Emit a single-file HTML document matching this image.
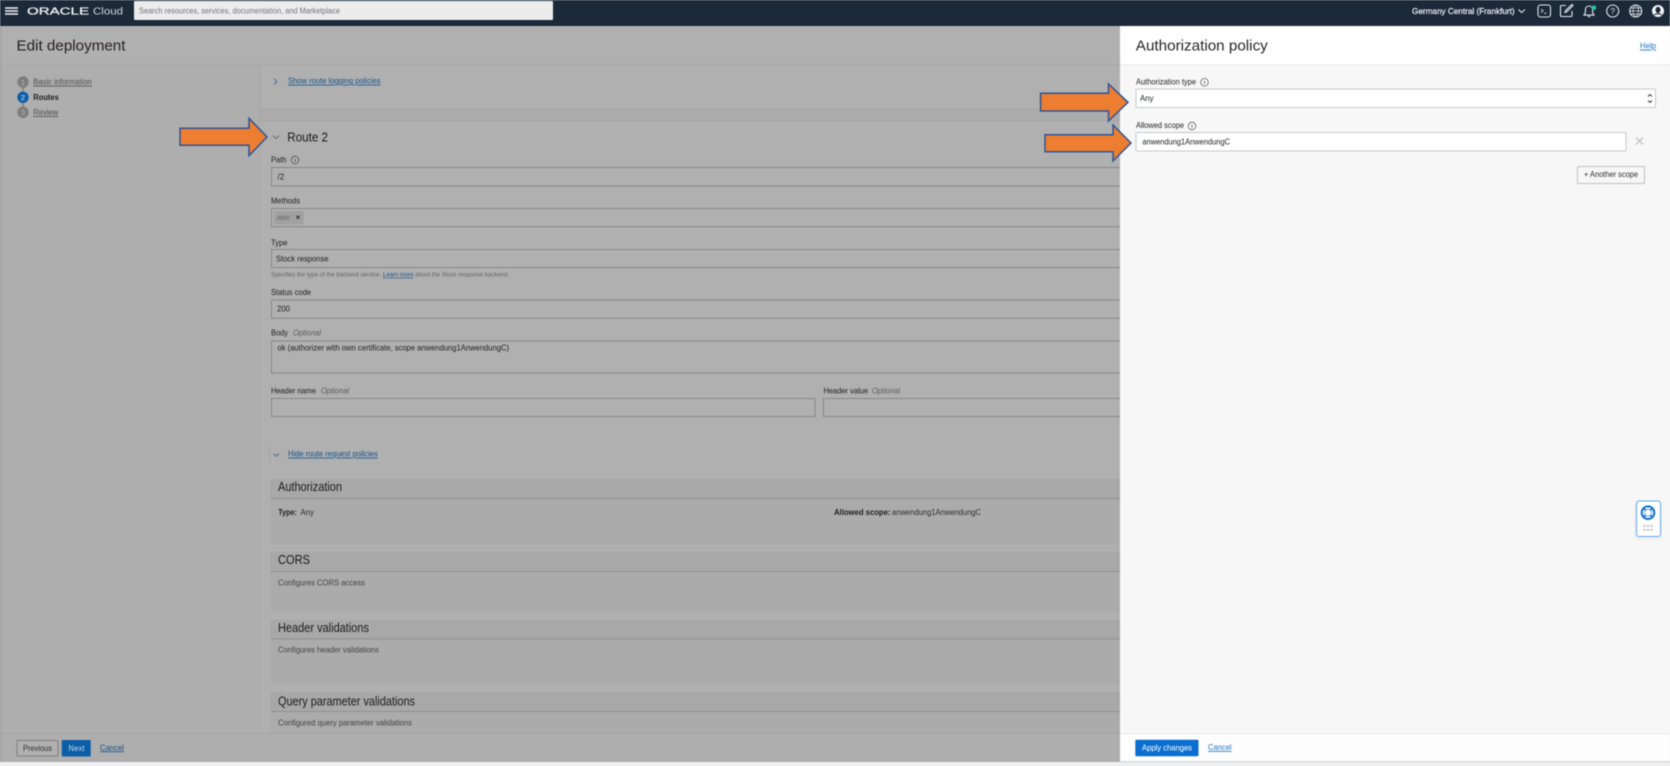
<!DOCTYPE html>
<html lang="en">
<head>
<meta charset="utf-8">
<title>Edit deployment</title>
<style>
html,body{margin:0;padding:0;width:1670px;height:766px;overflow:hidden;background:#f0f0f0}
svg{display:block;filter:blur(.5px)}
text{font-family:"Liberation Sans",Arial,sans-serif;font-size:8px;fill:#262626}
.l{font-size:8px;fill:#1f1f1f}
.o{font-size:8px;font-style:italic;fill:#5c5c5c}
.v{font-size:8px;fill:#222}
.h{font-size:12.5px;fill:#1c1c1c}
.s{font-size:8px;fill:#444}
.a{fill:#15528c;text-decoration:underline}
.f{fill:#b0b0b0;stroke:#878787;stroke-width:1}
.w{fill:#fff;stroke:#c4c9ce;stroke-width:1}
.b{fill:#a8a8a8}
.c{fill:#ababab}
.r{fill:#8f8f8f}
.i{fill:none;stroke:#555;stroke-width:.8}
.ic{fill:none;stroke:#e4e8ec;stroke-width:1.1}
.ar{fill:#ed7d31;stroke:#2f5597;stroke-width:1.5}
</style>
</head>
<body>
<svg width="1670" height="766" viewBox="0 0 1670 766" xmlns="http://www.w3.org/2000/svg">
<!-- page background -->
<rect width="1670" height="766" fill="#efefef"/>
<rect y="26" width="1120" height="736" fill="#b0b0b0"/>
<rect y="26" width="1" height="736" fill="#8d8d8d"/>
<!-- header -->
<text x="16.5" y="50.7" style="font-size:15.2px;fill:#262120" textLength="109" lengthAdjust="spacingAndGlyphs">Edit deployment</text>
<rect y="64" x="1" width="1119" height="1" fill="#a8a8a8"/>
<!-- left nav -->
<rect x="1" y="65" width="259" height="668" fill="#aeaeae"/>
<rect x="22.3" y="84" width="1.4" height="28" fill="#7e7e7e"/>
<circle cx="23" cy="82" r="5.7" fill="#7d7d7d"/>
<text x="23" y="85" text-anchor="middle" style="font-size:7.5px;fill:#b8b8b8">1</text>
<circle cx="23" cy="97.3" r="5.7" fill="#0c5ea8"/>
<text x="23" y="100.2" text-anchor="middle" style="font-size:7.5px;fill:#e4eef7">2</text>
<circle cx="23" cy="112.3" r="5.7" fill="#7d7d7d"/>
<text x="23" y="115.2" text-anchor="middle" style="font-size:7.5px;fill:#b8b8b8">3</text>
<text x="33.3" y="84.7" textLength="58.5" lengthAdjust="spacingAndGlyphs" style="fill:#4d4d4d;text-decoration:underline">Basic information</text>
<text x="33.3" y="100" textLength="25.5" lengthAdjust="spacingAndGlyphs" style="font-weight:bold;fill:#1c1c1c">Routes</text>
<text x="33.3" y="115" textLength="25" lengthAdjust="spacingAndGlyphs" style="fill:#4d4d4d;text-decoration:underline">Review</text>

<!-- main column -->
<rect x="260" y="65" width="860" height="668" fill="#acacac"/>
<rect x="260" y="65" width="860" height="44" fill="#b0b0b0"/>
<rect x="260" y="108.5" width="860" height="1" fill="#a4a4a4"/>
<rect x="259.5" y="65" width="1" height="668" fill="#a4a4a4"/>
<path d="M274 78.500l3 3-3 3" fill="none" stroke="#2a5f94" stroke-width=".8"/>
<text x="288" y="83.7" textLength="92.5" lengthAdjust="spacingAndGlyphs" class="a">Show route logging policies</text>

<rect x="260" y="120.7" width="860" height="612" fill="#b0b0b0"/>
<rect x="260" y="120.2" width="860" height="1" fill="#a4a4a4"/>
<path d="M273 135.700l3 2.800 3-2.800" fill="none" stroke="#555" stroke-width=".8"/>
<text x="287.3" y="141.3" textLength="40.7" lengthAdjust="spacingAndGlyphs" style="font-size:12.5px;fill:#1a1a1a">Route 2</text>

<text x="271" y="162.7" class="l" textLength="15.5" lengthAdjust="spacingAndGlyphs">Path</text>
<circle cx="295" cy="160" r="3.8" class="i"/><rect x="294.6" y="158.8" width=".9" height="3" fill="#555"/>
<rect x="271.5" y="167.5" width="860" height="18.5" class="f"/>
<text x="277.5" y="179.7" class="v">/2</text>

<text x="271" y="203.7" class="l" textLength="29" lengthAdjust="spacingAndGlyphs">Methods</text>
<rect x="271.5" y="208.5" width="860" height="18.2" class="f"/>
<rect x="274" y="211" width="29.5" height="13.3" fill="#a0a0a0"/>
<text x="277" y="220" style="font-size:6.5px;fill:#5e5e5e" textLength="13" lengthAdjust="spacing">ANY</text>
<path d="M296.4 215.6l3.2 3.2m0-3.2l-3.2 3.2" stroke="#333" stroke-width="1" fill="none"/>

<text x="271" y="245.3" class="l" textLength="16.5" lengthAdjust="spacingAndGlyphs">Type</text>
<rect x="271.5" y="249.5" width="860" height="18" class="f"/>
<text x="276" y="261.3" class="v" textLength="52.5" lengthAdjust="spacingAndGlyphs">Stock response</text>
<text x="271" y="276.7" style="font-size:6.2px;fill:#666" textLength="110" lengthAdjust="spacingAndGlyphs">Specifies the type of the backend service.</text>
<text x="383" y="276.7" style="font-size:6.2px;text-decoration:underline" class="a" textLength="30.5" lengthAdjust="spacingAndGlyphs">Learn more</text>
<text x="415" y="276.7" style="font-size:6.2px;fill:#666" textLength="94" lengthAdjust="spacingAndGlyphs">about the Stock response backend.</text>

<text x="271" y="295" class="l" textLength="40" lengthAdjust="spacingAndGlyphs">Status code</text>
<rect x="271.5" y="300" width="860" height="18.2" class="f"/>
<text x="277" y="311.7" class="v" textLength="13" lengthAdjust="spacingAndGlyphs">200</text>

<text x="271" y="335.7" class="l" textLength="17" lengthAdjust="spacingAndGlyphs">Body</text>
<text x="293" y="335.7" class="o" textLength="28" lengthAdjust="spacingAndGlyphs">Optional</text>
<rect x="271.5" y="341" width="860" height="32" class="f"/>
<text x="277.5" y="350.7" class="v" textLength="231.5" lengthAdjust="spacingAndGlyphs">ok (authorizer with own certificate, scope anwendung1AnwendungC)</text>

<text x="271" y="393.3" class="l" textLength="45" lengthAdjust="spacingAndGlyphs">Header name</text>
<text x="321" y="393.3" class="o" textLength="28" lengthAdjust="spacingAndGlyphs">Optional</text>
<rect x="271.5" y="398.5" width="543.5" height="18" class="f"/>
<text x="823.5" y="393.3" class="l" textLength="44.5" lengthAdjust="spacingAndGlyphs">Header value</text>
<text x="872" y="393.3" class="o" textLength="28" lengthAdjust="spacingAndGlyphs">Optional</text>
<rect x="823.5" y="398.5" width="310" height="18" class="f"/>

<rect x="269.3" y="447" width=".8" height="15" fill="#97a1ab"/>
<path d="M273.500 453.500l2.800 2.800 2.800-2.800" fill="none" stroke="#2a5f94" stroke-width=".8"/>
<text x="288" y="456.7" textLength="89.8" lengthAdjust="spacingAndGlyphs" class="a">Hide route request policies</text>

<!-- policy cards -->
<rect x="270.6" y="479" width="850" height="65" class="c"/>
<rect x="270.6" y="479" width="850" height="19" class="b"/>
<rect x="270.6" y="498" width="850" height="1" class="r"/>
<text x="278" y="491" class="h" textLength="64" lengthAdjust="spacingAndGlyphs">Authorization</text>
<text x="278.3" y="515" textLength="18.5" lengthAdjust="spacingAndGlyphs" style="font-weight:bold;fill:#1e1e1e">Type:</text>
<text x="300.5" y="515" textLength="13.5" lengthAdjust="spacingAndGlyphs" style="fill:#2e2e2e">Any</text>
<text x="834" y="515" textLength="56.5" lengthAdjust="spacingAndGlyphs" style="font-weight:bold;fill:#1e1e1e">Allowed scope:</text>
<text x="892" y="515" textLength="89" lengthAdjust="spacingAndGlyphs" style="fill:#2e2e2e">anwendung1AnwendungC</text>

<rect x="270.6" y="552" width="850" height="59.7" class="c"/>
<rect x="270.6" y="552" width="850" height="19" class="b"/>
<rect x="270.6" y="571" width="850" height="1" class="r"/>
<text x="278" y="564" class="h" textLength="32" lengthAdjust="spacingAndGlyphs">CORS</text>
<text x="278" y="585.3" class="s" textLength="87" lengthAdjust="spacingAndGlyphs">Configures CORS access</text>

<rect x="270.6" y="620" width="850" height="65" class="c"/>
<rect x="270.6" y="620" width="850" height="18.5" class="b"/>
<rect x="270.6" y="638.3" width="850" height="1" class="r"/>
<text x="278" y="632" class="h" textLength="91" lengthAdjust="spacingAndGlyphs">Header validations</text>
<text x="278" y="652.3" class="s" textLength="101" lengthAdjust="spacingAndGlyphs">Configures header validations</text>

<rect x="270.6" y="692" width="850" height="41" class="c"/>
<rect x="270.6" y="692" width="850" height="19" class="b"/>
<rect x="270.6" y="711" width="850" height="1" class="r"/>
<text x="278" y="705.3" class="h" textLength="137" lengthAdjust="spacingAndGlyphs">Query parameter validations</text>
<text x="278" y="725.7" class="s" textLength="134" lengthAdjust="spacingAndGlyphs">Configured query parameter validations</text>

<!-- footer left -->
<rect x="1" y="733" width="1119" height="29" fill="#aeaeae"/>
<rect x="1" y="733" width="1119" height="1" fill="#a4a4a4"/>
<rect x="17" y="740.5" width="41" height="15.5" rx="1" fill="#b0b0b0" stroke="#7e7e7e"/>
<text x="23" y="751" style="fill:#333" textLength="29" lengthAdjust="spacingAndGlyphs">Previous</text>
<rect x="61.7" y="740" width="29" height="16.5" rx="1" fill="#0c5ea8"/>
<text x="68.5" y="751" style="fill:#c6d6e6" textLength="16" lengthAdjust="spacingAndGlyphs">Next</text>
<text x="100" y="750.3" class="a" textLength="24" lengthAdjust="spacingAndGlyphs">Cancel</text>

<!-- right panel -->
<rect x="1120" y="26" width="550" height="736" fill="#f7f7f7"/>
<rect x="1120" y="26" width="550" height="38" fill="#fff"/>
<rect x="1120" y="64" width="550" height="1.2" fill="#ececec"/>
<text x="1135.8" y="50.7" style="font-size:15.2px;fill:#262626" textLength="132" lengthAdjust="spacingAndGlyphs">Authorization policy</text>
<text x="1640" y="48.7" style="font-size:8.5px;fill:#1f74c6;text-decoration:underline" textLength="16" lengthAdjust="spacingAndGlyphs">Help</text>

<text x="1136" y="84.3" class="l" textLength="60" lengthAdjust="spacingAndGlyphs">Authorization type</text>
<circle cx="1204.5" cy="82.3" r="3.8" fill="none" stroke="#666" stroke-width=".8"/><rect x="1204.1" y="81" width=".9" height="3" fill="#666"/>
<rect x="1136" y="89" width="519.5" height="18.5" rx="1" class="w"/>
<text x="1140" y="101" class="v" textLength="13.5" lengthAdjust="spacingAndGlyphs">Any</text>
<path d="M1648 96.5l2-2 2 2M1648 100.5l2 2 2-2" fill="none" stroke="#333" stroke-width=".9"/>

<text x="1136" y="128" class="l" textLength="48" lengthAdjust="spacingAndGlyphs">Allowed scope</text>
<circle cx="1192" cy="126" r="3.8" fill="none" stroke="#666" stroke-width=".8"/><rect x="1191.6" y="124.7" width=".9" height="3" fill="#666"/>
<rect x="1136" y="132.5" width="490" height="18.5" rx="1" class="w"/>
<text x="1142.4" y="144.7" class="v" textLength="87.6" lengthAdjust="spacingAndGlyphs">anwendung1AnwendungC</text>
<path d="M1636 137.5l7 7m0-7l-7 7" stroke="#b8b8b8" stroke-width="1" fill="none"/>

<rect x="1577.5" y="166.5" width="67" height="17" rx="1" fill="#f7f7f7" stroke="#bcc0c4"/>
<text x="1584" y="176.9" style="fill:#2e2e2e" textLength="54" lengthAdjust="spacingAndGlyphs">+ Another scope</text>

<!-- panel footer -->
<rect x="1120" y="733" width="550" height="28.5" fill="#fdfdfd"/>
<rect x="1120" y="733" width="550" height="1" fill="#e8e8e8"/>
<rect x="1120" y="761" width="550" height="1.3" fill="#d5dade"/>
<rect x="1135.3" y="739.7" width="63.2" height="16.6" rx="1" fill="#0a6fd0"/>
<text x="1142" y="750.7" style="fill:#fff" textLength="50" lengthAdjust="spacingAndGlyphs">Apply changes</text>
<text x="1208" y="750" style="fill:#1f74c6;text-decoration:underline" textLength="23.6" lengthAdjust="spacingAndGlyphs">Cancel</text>

<!-- help widget -->
<rect x="1634" y="503" width="28" height="37" rx="4" fill="#e8e8e8" opacity=".5"/>
<rect x="1636.5" y="501" width="24" height="35.5" rx="2.5" fill="#fff" stroke="#62a9e6" stroke-width="1"/>
<circle cx="1648" cy="512.7" r="6.3" fill="none" stroke="#1273cf" stroke-width="2"/>
<circle cx="1648" cy="512.7" r="3.5" fill="#fff" stroke="#1273cf" stroke-width=".6"/>
<path d="M1643.5 508.2l2.2 2.2M1652.5 508.2l-2.2 2.2M1643.5 517.2l2.2-2.2M1652.5 517.2l-2.2-2.2" stroke="#1273cf" stroke-width="1.6"/>
<g fill="#a9b0b7"><rect x="1643.5" y="525" width="1.8" height="1.8"/><rect x="1647.1" y="525" width="1.8" height="1.8"/><rect x="1650.7" y="525" width="1.8" height="1.8"/><rect x="1643.5" y="529" width="1.8" height="1.8"/><rect x="1647.1" y="529" width="1.8" height="1.8"/><rect x="1650.7" y="529" width="1.8" height="1.8"/></g>

<!-- top bar -->
<rect width="1670" height="26" fill="#1b2938"/>
<path d="M5 8h13M5 11h13M5 14h13" stroke="#f5f6f7" stroke-width="1.5"/>
<text x="27" y="14.4" style="font-size:10.4px;fill:#f2f3f4;stroke:#f2f3f4;stroke-width:.25" textLength="62" lengthAdjust="spacingAndGlyphs">ORACLE</text>
<text x="93" y="14.6" style="font-size:10.5px;fill:#d3d6d9" textLength="30" lengthAdjust="spacingAndGlyphs">Cloud</text>
<rect x="134" y="1" width="419" height="19" rx="1" fill="#ececec"/>
<text x="139" y="13.7" style="fill:#6e7378" textLength="201" lengthAdjust="spacingAndGlyphs">Search resources, services, documentation, and Marketplace</text>
<text x="1412" y="14" style="font-size:8.2px;fill:#eef2f6;stroke:#eef2f6;stroke-width:.2" textLength="102.6" lengthAdjust="spacingAndGlyphs">Germany Central (Frankfurt)</text>
<path d="M1518.5 9.5l3.2 3 3.2-3" class="ic"/>
<rect x="1538" y="5" width="12.5" height="12" rx="2.5" class="ic"/>
<path d="M1541 9l2.2 1.8-2.2 1.8M1544 13.3h2.5" fill="none" stroke="#e4e8ec" stroke-width=".8"/>
<path d="M1566 5.500h-4.500a1 1 0 0 0-1 1v9a1 1 0 0 0 1 1h9.500a1 1 0 0 0 1-1V11" class="ic"/>
<path d="M1573 5.500l-6.500 6.500-1.500.4.4-1.600 6.500-6.300z" class="ic"/>
<path d="M1589 6c-2.400 0-3.600 1.800-3.600 4v2.500l-1.400 2.600h10l-1.400-2.600V10c0-2.200-1.200-4-3.600-4zM1587.800 16.600h2.400" class="ic"/>
<circle cx="1594" cy="7.700" r="2.300" fill="#23c4a0"/>
<circle cx="1612.700" cy="11" r="6" class="ic"/>
<text x="1612.700" y="13.800" text-anchor="middle" style="font-size:8px;fill:#e4e8ec">?</text>
<circle cx="1635.700" cy="11" r="6" class="ic"/>
<path d="M1629.700 11h12M1630.600 8h10.200M1630.600 14h10.200M1635.700 5c-3.800 3.500-3.800 8.500 0 12M1635.700 5c3.800 3.500 3.800 8.500 0 12" fill="none" stroke="#e4e8ec" stroke-width=".7"/>
<circle cx="1658" cy="11" r="6" fill="#f4f5f6"/>
<ellipse cx="1658" cy="10" rx="2.500" ry="3.200" fill="#1b2938"/>
<path d="M1654 15c1.500-1.500 6.500-1.500 8 0" stroke="#1b2938" stroke-width="1" fill="none"/>

<!-- annotation arrows -->
<path class="ar" d="M180 128.300H249V118.300L267 137L249 155.700V145.300H180Z"/>
<path class="ar" d="M1040.600 93.300H1108.500V84L1128 102.300L1108.500 121V111H1040.600Z"/>
<path class="ar" d="M1045 134.700H1113V125L1131 143L1113 161V151.700H1045Z"/>
</svg>
</body>
</html>
